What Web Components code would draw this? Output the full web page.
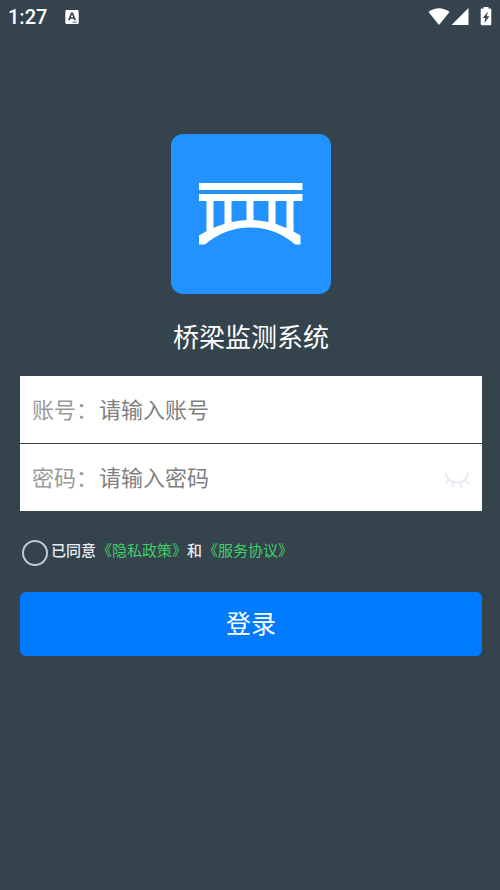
<!DOCTYPE html>
<html lang="zh-CN">
<head>
<meta charset="utf-8">
<meta name="viewport" content="width=device-width, initial-scale=1">
<title>桥梁监测系统</title>
<style>
  body {
    margin: 0;
    background: #35434d;
    color: #fff;
    font-family: Roboto, "Noto Sans CJK SC", sans-serif;
  }
</style>
</head>
<body>
<login-page></login-page>

<template id="status-bar">
  <style>
    :host { display: flex; align-items: center; justify-content: space-between; height: 34px; padding: 0 8px; }
    div { display: flex; align-items: center; }
    .left { gap: 18px; }
    .clock { font-size: 20px; line-height: 24px; font-weight: 500; }
    svg { display: block; fill: #fff; }
    .battery { margin-left: 10px; }
  </style>
  <div class="left">
    <span class="clock">1:27</span>
    <svg width="15" height="16" viewBox="0 0 15 16" aria-hidden="true">
      <path fill-rule="evenodd" d="M1.500 1H12.500Q13.700 1 13.700 2.500V13.500Q13.700 15 12.500 15H1.500Q.3 15 .3 13.500V2.500Q.3 1 1.500 1ZM6 3.500 3 11.300H4.800L5.400 9.800H8.600L9.200 11.300H11L8 3.500ZM5.900 8.300 7 5.300 8.100 8.300ZM7.500 12.800V13.500H12V12.800Z"/>
    </svg>
  </div>
  <div>
    <svg width="22" height="20" viewBox="0 0 22 20" aria-hidden="true"><path d="M.5 5Q11-2.500 21.500 5L11 18Z"/></svg>
    <svg width="20" height="20" viewBox="0 0 20 20" aria-hidden="true"><path d="M1.500 18 18.500 1V18Z"/></svg>
    <svg class="battery" width="12" height="20" viewBox="0 0 12 20" aria-hidden="true">
      <path fill-rule="evenodd" d="M3.500 0H8.500V1.500H10Q11.300 1.500 11.300 2.800V17Q11.300 18.300 10 18.300H2Q.7 18.300 .7 17V2.800Q.7 1.500 2 1.500H3.500ZM8 4.500 2.800 11H5.400L4.500 16 9.300 9.200H6.700Z"/>
    </svg>
  </div>
</template>

<template id="bridge-logo">
  <style>
    :host { display: block; width: 160px; height: 160px; border-radius: 12px; background: #2192ff; }
    svg { display: block; }
  </style>
  <svg width="160" height="160" viewBox="0 0 160 160" role="img" aria-label="桥梁">
    <g fill="#fff">
      <path d="M28 49H131.500V56H28ZM28 60H131.500V67H28Z"/>
      <path d="M35.500 66H42.500V99H35.500ZM53.500 66H60.500V93H53.500ZM75.500 66H82.500V90H75.500ZM97.500 66H104.500V93H97.500ZM115.500 66H122.500V99H115.500Z"/>
      <path d="M28 101.500Q53 86 79 86Q105 86 129.500 101.500V110.500H124Q104 93.500 79 93.500Q54 93.500 34 110.500H28Z"/>
    </g>
  </svg>
</template>

<template id="login-field">
  <style>
    :host { display: flex; align-items: center; height: 65px; padding: 2px 12px 0; background: #fff; font-size: 22px; line-height: 32px; }
    label { flex: none; color: #999; }
    input { flex: 1; min-width: 0; margin: 0; padding: 0 0 0 1px; border: 0; outline: 0; background: none; color: #333; font: inherit; }
    input::placeholder { color: #808080; opacity: 1; }
  </style>
  <label for="value"></label>
  <input id="value">
  <slot></slot>
</template>

<template id="reveal-button">
  <style>
    :host { display: block; }
    button { display: block; padding: 0; border: 0; background: none; cursor: pointer; }
    svg { display: block; }
  </style>
  <button type="button" aria-label="显示密码">
    <svg width="28" height="22" viewBox="0 0 28 22" fill="none" stroke="#ebebf3" stroke-width="2">
      <path d="M3.500 4.500Q5.500 14.500 15 14.500T26.500 4.500M6.500 12 3.500 15.500M11.500 14.500 10.500 19.500M18.500 14.500 19.500 19.500M23.500 12 26.500 15.500"/>
    </svg>
  </button>
</template>

<template id="agree-terms">
  <style>
    :host { display: flex; align-items: center; gap: 3px; padding: 0 2px; font-size: 15px; line-height: 22px; }
    input { flex: none; appearance: none; width: 26px; height: 26px; margin: 4px 0 0; border: 2px solid #c3c9d6; border-radius: 50%; }
    input:checked { background: #007aff; }
    label { font-weight: 500; color: #e8ebf0; }
    a { margin-left: 1px; color: #41cd68; font-weight: 400; text-decoration: none; }
  </style>
  <input type="checkbox" id="agree">
  <label for="agree">已同意<a href="#privacy">《隐私政策》</a>和<a href="#service">《服务协议》</a></label>
</template>

<template id="submit-button">
  <style>
    :host { display: block; }
    button { display: block; width: 100%; height: 64px; padding: 2px 0 0; border: 0; border-radius: 6px; background: #007aff; color: #fff; font-family: inherit; font-size: 25px; line-height: 36px; cursor: pointer; }
  </style>
  <button type="submit"><slot></slot></button>
</template>

<template id="login-page">
  <style>
    :host { display: block; min-height: 100vh; box-sizing: border-box; }
    main { display: flex; flex-direction: column; padding: 100px 18px 24px 20px; }
    bridge-logo { align-self: center; }
    h1 { margin: 25px 0 19px; text-align: center; font-size: 26px; line-height: 38px; font-weight: 400; }
    .fields { display: grid; gap: 1px; }
    agree-terms { margin: 25px 0 26px; }
  </style>
  <status-bar></status-bar>
  <main>
    <bridge-logo></bridge-logo>
    <h1>桥梁监测系统</h1>
    <div class="fields">
      <login-field label="账号：" placeholder="请输入账号"></login-field>
      <login-field label="密码：" placeholder="请输入密码" type="password"><reveal-button></reveal-button></login-field>
    </div>
    <agree-terms></agree-terms>
    <submit-button>登录</submit-button>
  </main>
</template>

<script>
  class TemplateElement extends HTMLElement {
    constructor() {
      super();
      const template = document.getElementById(this.localName);
      this.attachShadow({ mode: "open" }).append(template.content.cloneNode(true));
    }
  }

  class LoginField extends TemplateElement {
    connectedCallback() {
      const input = this.shadowRoot.querySelector("input");
      this.shadowRoot.querySelector("label").textContent = this.getAttribute("label");
      input.placeholder = this.getAttribute("placeholder");
      input.type = this.getAttribute("type") || "text";
    }
  }

  class RevealButton extends TemplateElement {
    connectedCallback() {
      this.shadowRoot.querySelector("button").onclick = () => {
        const input = this.closest("login-field").shadowRoot.querySelector("input");
        input.type = input.type === "password" ? "text" : "password";
      };
    }
  }

  customElements.define("status-bar", class extends TemplateElement {});
  customElements.define("bridge-logo", class extends TemplateElement {});
  customElements.define("login-field", LoginField);
  customElements.define("reveal-button", RevealButton);
  customElements.define("agree-terms", class extends TemplateElement {});
  customElements.define("submit-button", class extends TemplateElement {});
  customElements.define("login-page", class extends TemplateElement {});
</script>
</body>
</html>
